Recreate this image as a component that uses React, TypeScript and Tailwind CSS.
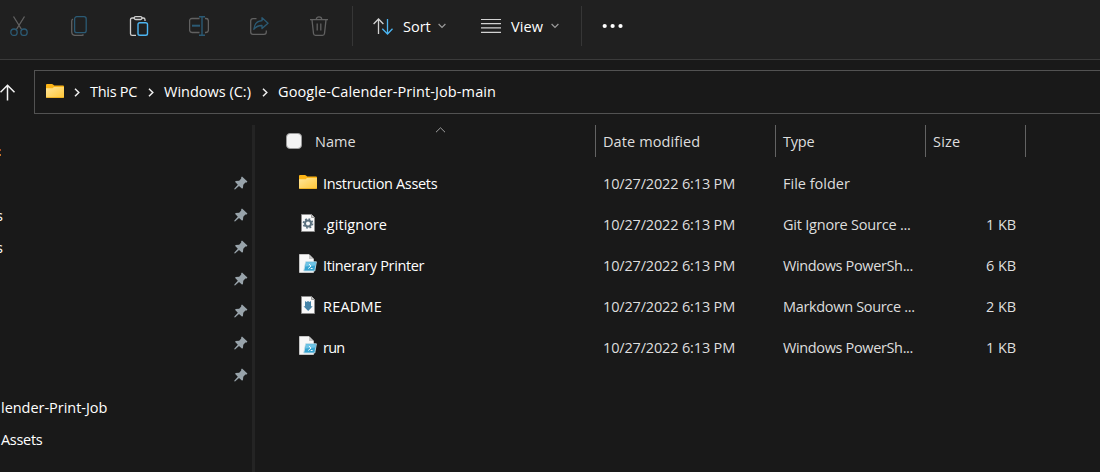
import type { ReactNode } from "react";

function Svg({ w, h, children }: { w: number; h: number; children: ReactNode }) {
  return (
    <svg width={w} height={h} viewBox={`0 0 ${w} ${h}`} fill="none" className="block shrink-0">
      {children}
    </svg>
  );
}

const GREY = "#616161";
const TEAL = "#2b5a74";

function CutIcon() {
  return (
    <Svg w={20} h={20}>
      <path d="M4.5 0.5 12.6 13.5M15.5 0.5 7.4 13.5" stroke={GREY} strokeWidth="1.3" />
      <circle cx="5" cy="16.2" r="3.2" stroke={TEAL} strokeWidth="1.3" />
      <circle cx="15" cy="16.2" r="3.2" stroke={TEAL} strokeWidth="1.3" />
    </Svg>
  );
}
function CopyIcon() {
  return (
    <Svg w={20} h={20}>
      <path d="M4 3.200C3 3.600 2.700 4 2.700 5v10.500c0 2.200 1.200 3.900 3.600 3.900H12.500c1 0 1.500-.2 2-.9" stroke={GREY} strokeWidth="1.300" />
      <rect x="5.600" y=".7" width="11.600" height="16" rx="2.200" stroke={TEAL} strokeWidth="1.300" />
    </Svg>
  );
}
function PasteIcon() {
  return (
    <Svg w={20} h={20}>
      <path d="M5.500 2H3.200Q1.500 2 1.500 3.700v14Q1.500 19.300 3.200 19.300H7M12.500 2h1.800Q16 2 16 3.700V5" stroke="#cfcfcf" strokeWidth="1.300" />
      <rect x="5.200" y=".7" width="7.800" height="2.800" rx="1.400" stroke="#cfcfcf" strokeWidth="1.300" />
      <rect x="9" y="6.700" width="9.500" height="12.600" rx="1.800" stroke="#4cb5f2" strokeWidth="1.400" />
    </Svg>
  );
}
function RenameIcon() {
  return (
    <Svg w={20} h={20}>
      <path d="M10.500 2.500H3Q.6 2.500.6 4.900v9.200Q.6 16.500 3 16.500h7.500M16 2.500h1Q19.400 2.500 19.400 4.900v9.200Q19.400 16.500 17 16.500h-1" stroke={GREY} strokeWidth="1.300" />
      <path d="M3 9.700h8" stroke={TEAL} strokeWidth="2" />
      <path d="M10 .7h6M10 19.300h6M13 .7v18.600" stroke={TEAL} strokeWidth="1.400" />
    </Svg>
  );
}
function ShareIcon() {
  return (
    <Svg w={20} h={20}>
      <path d="M7.500 2.700H4Q1.700 2.700 1.700 5v11Q1.700 18.300 4 18.300h11Q17.300 18.300 17.300 16v-1.500" stroke={GREY} strokeWidth="1.300" />
      <path d="M13 1.600 19 7.300 13 12.600V9.500C9.500 9.300 7 10.600 4.800 13.300 5.300 8.500 8 5.100 13 4.700Z" stroke={TEAL} strokeWidth="1.300" strokeLinejoin="round" />
    </Svg>
  );
}
function TrashIcon() {
  return (
    <Svg w={20} h={20}>
      <path d="M1 3.600h18M7.300 3.300C7.300 0 12.700 0 12.700 3.300M3 3.900 4.500 17.500Q4.700 19.300 6.500 19.300h7Q15.300 19.300 15.500 17.500L17 3.900M8.200 7.500v7M11.800 7.500v7" stroke={GREY} strokeWidth="1.300" />
    </Svg>
  );
}
function Chevron({ color = "#9a9a9a" }: { color?: string }) {
  return (
    <Svg w={8} h={6}>
      <path d="M.6 1 4 4.400 7.400 1" stroke={color} strokeWidth="1.200" />
    </Svg>
  );
}
function Folder() {
  return (
    <svg width="18" height="14" viewBox="0 0 18 14" className="block shrink-0">
      <defs>
        <linearGradient id="folderFront" x1="0" y1="0" x2="1" y2="1">
          <stop offset="0" stopColor="#ffe69a" />
          <stop offset="1" stopColor="#ffc636" />
        </linearGradient>
      </defs>
      <path d="M0 1Q0 0 1 0h5q.6 0 1 .5L8.200 1.500H17q1 0 1 1V8H0Z" fill="#fdb516" />
      <path d="M0 4.200h6.200q.5 0 .9-.5L8 3H18V13q0 1-1 1H1Q0 14 0 13Z" fill="url(#folderFront)" />
      <path d="M.3 13.500H17.700" stroke="#e8a91c" strokeWidth=".8" />
    </svg>
  );
}
function Page({ children }: { children: ReactNode }) {
  return (
    <Svg w={14} h={18}>
      <path d="M.5.500H10.500L13.500 3.500V17.500H.5Z" fill="#fafafa" stroke="#8d8d8d" />
      <path d="M10.500.5V3.500H13.500" fill="#c9c9c9" stroke="#8d8d8d" strokeWidth=".8" />
      {children}
    </Svg>
  );
}
function GearFile() {
  return (
    <Page>
      <circle cx="7" cy="9.500" r="4.500" stroke="#5c7280" strokeWidth="1.700" strokeDasharray="1.770 1.770" />
      <circle cx="7" cy="9.500" r="3" stroke="#5c7280" strokeWidth="2" />
    </Page>
  );
}
function MarkdownFile() {
  return (
    <Page>
      <path d="M4 5 5.500 6 7 5 8.500 6 10 5V10.200H11.700L7.200 15 2.500 10.200H4Z" fill="#4684a8" />
    </Page>
  );
}
function PowerShellFile() {
  return (
    <Svg w={18} h={20}>
      <path d="M.5.500H10L14.500 5V18.500H.5Z" fill="#f8f8f8" stroke="#d5d5d5" strokeWidth=".8" />
      <path d="M10 .5V5h4.500Z" fill="#c4c4c4" />
      <path d="M6.700 7.800H17.400L15.800 17H4.700Z" fill="#35a3d0" stroke="#c3dbe6" strokeWidth=".9" />
      <path d="M7.100 8.300H16.900L16.300 11.600 6.300 12.600Z" fill="#6fc4e6" />
      <path d="M10 10 12 12.100 9.200 14.500M11.700 14.500h1.900" stroke="#eefaff" strokeWidth="1" />
    </Svg>
  );
}
function Pin() {
  return (
    <Svg w={14} h={14}>
      <path d="M8 .4 13.400 5.600 12.700 6.400 11.400 6.500 9.300 8.800 8.900 12.300 7.900 12.500 5 9.900 1 13.500.3 13.300.4 12.500 3.800 8.700 1.200 6 1.500 5 5.200 4.800 7.200 2.600V1.200Z" fill="#98a3aa" />
    </Svg>
  );
}
function Crumb() {
  return (
    <Svg w={6} h={9}>
      <path d="M1 .8 4.800 4.500 1 8.200" stroke="#efefef" strokeWidth="1.500" />
    </Svg>
  );
}

const actions = [CutIcon, CopyIcon, PasteIcon, RenameIcon, ShareIcon, TrashIcon];

const files = [
  { name: "Instruction Assets", tracking: "tracking-[-0.33px]", icon: <Folder />, type: "File folder", typeTracking: "tracking-[0px]", size: "" },
  { name: ".gitignore", tracking: "tracking-[0.03px]", icon: <GearFile />, type: "Git Ignore Source ...", typeTracking: "tracking-[-0.22px]", size: "1 KB" },
  { name: "Itinerary Printer", tracking: "tracking-[-0.36px]", icon: <PowerShellFile />, type: "Windows PowerSh...", typeTracking: "tracking-[-0.36px]", size: "6 KB" },
  { name: "README", tracking: "tracking-[0.2px]", icon: <MarkdownFile />, type: "Markdown Source ...", typeTracking: "tracking-[-0.33px]", size: "2 KB" },
  { name: "run", tracking: "tracking-[-0.8px]", icon: <PowerShellFile />, type: "Windows PowerSh...", typeTracking: "tracking-[-0.36px]", size: "1 KB" },
];

const pinned = ["", "s", "s", "", "", "", ""];

function Toolbar() {
  return (
    <header className="flex h-[60px] shrink-0 border-b border-[#3b3b3b] bg-[#202020]">
      <div className="-ml-[11px] flex h-[52px] items-center">
        {actions.map((Icon, i) => (
          <div key={i} className="flex w-[60px] justify-center">
            <Icon />
          </div>
        ))}
      </div>
      <div className="mt-1.5 ml-[3px] h-10 w-px bg-[#363636]" />
      <div className="ml-5 flex h-[52px] w-[108px] items-center">
        <Svg w={20} h={17}>
          <path d="M5.500 16V1M.6 6 5.500 1 10.400 6" stroke="#d2d2d2" strokeWidth="1.300" />
          <path d="M14.500 1V16M9.300 10.800 14.500 16 19.500 10.800" stroke="#4cb5f2" strokeWidth="1.300" />
        </Svg>
        <span className="ml-[10px] w-[35px] pt-0.5 tracking-[0px]">Sort</span>
        <Chevron />
      </div>
      <div className="flex h-[52px] w-[100px] items-center">
        <Svg w={20} h={14}>
          <path d="M0 .5H20M0 4.700H20M0 8.900H20M0 13.300H20" stroke="#d2d2d2" strokeWidth="1.200" />
        </Svg>
        <span className="ml-[10px] w-10 pt-0.5 tracking-[0.1px]">View</span>
        <Chevron />
      </div>
      <div className="mt-1.5 h-10 w-px bg-[#363636]" />
      <div className="ml-5 flex h-[52px] items-center">
        <Svg w={22} h={6}>
          <g fill="#fff">
            <circle cx="2.700" cy="3" r="2.100" />
            <circle cx="10.600" cy="3" r="2.100" />
            <circle cx="18.500" cy="3" r="2.100" />
          </g>
        </Svg>
      </div>
    </header>
  );
}

function AddressBar() {
  return (
    <div className="flex h-[65px] shrink-0 items-start pt-[10px]">
      <div className="flex h-11 w-[34px] items-center overflow-hidden">
        <div className="-ml-[1px]">
          <Svg w={17} h={17}>
            <path d="M8.500 16.500V1.200M1.500 8.200 8.500 1.200 15.500 8.200" stroke="#f4f4f4" strokeWidth="1.500" />
          </Svg>
        </div>
      </div>
      <div className="flex h-11 flex-1 items-center border border-r-0 border-[#525252] pl-[11px]">
        <div className="-mt-0.5"><Folder /></div>
        <div className="ml-[10px]"><Crumb /></div>
        <span className="ml-[10px] w-[58px]">This PC</span>
        <Crumb />
        <span className="ml-[10px] w-[98px] tracking-[0px]">Windows (C:)</span>
        <Crumb />
        <span className="ml-[10px] tracking-[0.1px]">Google-Calender-Print-Job-main</span>
      </div>
    </div>
  );
}

function Sidebar() {
  return (
    <nav className="flex w-[255px] shrink-0 flex-col overflow-hidden border-r-[3px] border-[#242424] pt-[11px]">
      <div className="flex h-8 items-center">
        <div className="flex h-[7px] w-px flex-col justify-between">
          <div className="h-0.5 bg-[#a84d24]" />
          <div className="h-0.5 bg-[#c7742c]" />
        </div>
      </div>
      {pinned.map((label, i) => (
        <div key={i} className="flex h-8 items-center justify-between pr-1">
          <span className="-ml-[4px]">{label}</span>
          <div className="-mt-0.5"><Pin /></div>
        </div>
      ))}
      <div className="flex h-8 items-center pl-[1px] tracking-[-0.03px]">lender-Print-Job</div>
      <div className="flex h-8 items-center pl-[1px]">Assets</div>
    </nav>
  );
}

function FileList() {
  return (
    <main className="flex-1 text-[#dedede]">
      <div className="flex h-8">
        <div className="relative flex w-[340px] items-center pl-[31px]">
          <div className="size-4 rounded-[4px] border border-[#9a9a9a] bg-[#f3f3f3]" />
          <span className="ml-[13px] pt-0.5 tracking-[0px]">Name</span>
          <div className="absolute top-0.5 left-[180px]">
            <Svg w={11} h={6}>
              <path d="M1 5.200 5.500.8 10 5.200" stroke="#a0a0a0" strokeWidth="1" />
            </Svg>
          </div>
        </div>
        <div className="flex w-[180px] items-center border-l border-[#636363] pt-0.5 pl-[7px] tracking-[0.1px]">Date modified</div>
        <div className="flex w-[150px] items-center border-l border-[#636363] pt-0.5 pl-[7px] tracking-[-0.2px]">Type</div>
        <div className="flex w-[101px] items-center border-x border-[#636363] pt-0.5 pl-[7px] tracking-[0.2px]">Size</div>
      </div>
      <div className="pt-[6px]">
        {files.map((f) => (
          <div key={f.name} className="flex h-[41px] items-center whitespace-nowrap">
            <div className="flex h-full w-[340px] items-center pl-11 text-white">
              <div className="-mt-[3px] flex w-[18px] justify-center">{f.icon}</div>
              <span className={`ml-[6px] ${f.tracking}`}>{f.name}</span>
            </div>
            <div className="w-[180px] pl-2 tracking-[-0.16px]">10/27/2022 6:13 PM</div>
            <div className={`w-[150px] pl-2 ${f.typeTracking}`}>{f.type}</div>
            <div className="w-[91px] text-right tracking-[-0.1px]">{f.size}</div>
          </div>
        ))}
      </div>
    </main>
  );
}

export default function App() {
  return (
    <div className="flex h-[472px] w-[1100px] flex-col overflow-hidden bg-[#191919] font-['Open_Sans','Noto_Sans',sans-serif] text-[14.5px] leading-5 tracking-[-0.3px] whitespace-nowrap text-white">
      <Toolbar />
      <AddressBar />
      <div className="flex min-h-0 flex-1">
        <Sidebar />
        <FileList />
      </div>
    </div>
  );
}
